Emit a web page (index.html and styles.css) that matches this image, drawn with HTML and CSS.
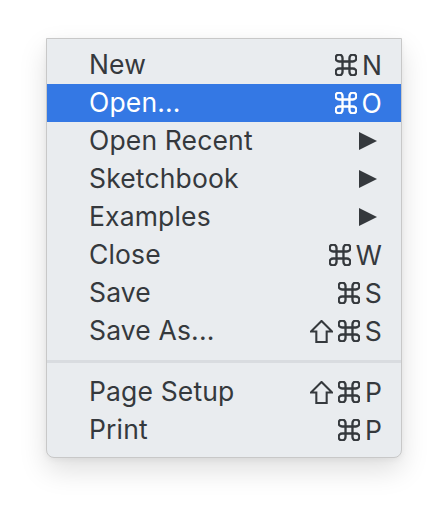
FILE: index.html
```html
<!DOCTYPE html>
<html>
<head>
<meta charset="utf-8">
<link rel="stylesheet" href="styles.css">
</head>
<body>
<div class="menu">
  <div class="item"><span class="label">New</span><span class="key"><svg class="cmd" viewBox="2.5 2.5 19 19"><path d="M18 3a3 3 0 0 0-3 3v12a3 3 0 0 0 3 3 3 3 0 0 0 3-3 3 3 0 0 0-3-3H6a3 3 0 0 0-3 3 3 3 0 0 0 3 3 3 3 0 0 0 3-3V6a3 3 0 0 0-3-3 3 3 0 0 0-3 3 3 3 0 0 0 3 3h12a3 3 0 0 0 3-3 3 3 0 0 0-3-3z"/></svg><span class="ch">N</span></span></div>
  <div class="item active"><span class="label">Open...</span><span class="key"><svg class="cmd" viewBox="2.5 2.5 19 19"><path d="M18 3a3 3 0 0 0-3 3v12a3 3 0 0 0 3 3 3 3 0 0 0 3-3 3 3 0 0 0-3-3H6a3 3 0 0 0-3 3 3 3 0 0 0 3 3 3 3 0 0 0 3-3V6a3 3 0 0 0-3-3 3 3 0 0 0-3 3 3 3 0 0 0 3 3h12a3 3 0 0 0 3-3 3 3 0 0 0-3-3z"/></svg><span class="ch">O</span></span></div>
  <div class="item"><span class="label">Open Recent</span><span class="key"><span class="tri"></span></span></div>
  <div class="item"><span class="label">Sketchbook</span><span class="key"><span class="tri"></span></span></div>
  <div class="item"><span class="label">Examples</span><span class="key"><span class="tri"></span></span></div>
  <div class="item"><span class="label">Close</span><span class="key"><svg class="cmd" viewBox="2.5 2.5 19 19"><path d="M18 3a3 3 0 0 0-3 3v12a3 3 0 0 0 3 3 3 3 0 0 0 3-3 3 3 0 0 0-3-3H6a3 3 0 0 0-3 3 3 3 0 0 0 3 3 3 3 0 0 0 3-3V6a3 3 0 0 0-3-3 3 3 0 0 0-3 3 3 3 0 0 0 3 3h12a3 3 0 0 0 3-3 3 3 0 0 0-3-3z"/></svg><span class="ch">W</span></span></div>
  <div class="item"><span class="label">Save</span><span class="key"><svg class="cmd" viewBox="2.5 2.5 19 19"><path d="M18 3a3 3 0 0 0-3 3v12a3 3 0 0 0 3 3 3 3 0 0 0 3-3 3 3 0 0 0-3-3H6a3 3 0 0 0-3 3 3 3 0 0 0 3 3 3 3 0 0 0 3-3V6a3 3 0 0 0-3-3 3 3 0 0 0-3 3 3 3 0 0 0 3 3h12a3 3 0 0 0 3-3 3 3 0 0 0-3-3z"/></svg><span class="ch">S</span></span></div>
  <div class="item"><span class="label">Save As...</span><span class="key"><svg class="shift" viewBox="2 2 20 20"><path d="M12 2.8L2.8 12H7.5V21.2H16.5V12H21.2Z"/></svg><svg class="cmd" viewBox="2.5 2.5 19 19"><path d="M18 3a3 3 0 0 0-3 3v12a3 3 0 0 0 3 3 3 3 0 0 0 3-3 3 3 0 0 0-3-3H6a3 3 0 0 0-3 3 3 3 0 0 0 3 3 3 3 0 0 0 3-3V6a3 3 0 0 0-3-3 3 3 0 0 0-3 3 3 3 0 0 0 3 3h12a3 3 0 0 0 3-3 3 3 0 0 0-3-3z"/></svg><span class="ch">S</span></span></div>
  <div class="sep"></div>
  <div class="item"><span class="label">Page Setup</span><span class="key"><svg class="shift" viewBox="2 2 20 20"><path d="M12 2.8L2.8 12H7.5V21.2H16.5V12H21.2Z"/></svg><svg class="cmd" viewBox="2.5 2.5 19 19"><path d="M18 3a3 3 0 0 0-3 3v12a3 3 0 0 0 3 3 3 3 0 0 0 3-3 3 3 0 0 0-3-3H6a3 3 0 0 0-3 3 3 3 0 0 0 3 3 3 3 0 0 0 3-3V6a3 3 0 0 0-3-3 3 3 0 0 0-3 3 3 3 0 0 0 3 3h12a3 3 0 0 0 3-3 3 3 0 0 0-3-3z"/></svg><span class="ch">P</span></span></div>
  <div class="item"><span class="label">Print</span><span class="key"><svg class="cmd" viewBox="2.5 2.5 19 19"><path d="M18 3a3 3 0 0 0-3 3v12a3 3 0 0 0 3 3 3 3 0 0 0 3-3 3 3 0 0 0-3-3H6a3 3 0 0 0-3 3 3 3 0 0 0 3 3 3 3 0 0 0 3-3V6a3 3 0 0 0-3-3 3 3 0 0 0-3 3 3 3 0 0 0 3 3h12a3 3 0 0 0 3-3 3 3 0 0 0-3-3z"/></svg><span class="ch">P</span></span></div>
</div>
</body>
</html>
```
FILE: styles.css
```css
html, body {
  margin: 0;
  padding: 0;
  background: #ffffff;
}
body {
  font-family: Inter, "Noto Sans", "Liberation Sans", sans-serif;
  min-height: 512px;
}
.menu {
  margin: 38px 0 0 46px;
  width: 354px;
  background: #e9ecef;
  border: 1px solid #c8c8c8;
  border-radius: 0 0 8px 8px;
  box-shadow: 0 12px 28px rgba(0, 0, 0, 0.13), 0 2px 6px rgba(0, 0, 0, 0.05);
  padding: 7px 0 8px;
}
.item {
  display: flex;
  justify-content: space-between;
  align-items: center;
  height: 38px;
  padding: 0 19px 0 42px;
  color: #35393d;
  font-size: 26.5px;
  letter-spacing: 0.15px;
}
.label {
  position: relative;
  top: -1px;
}
.item.active {
  background: #3478e4;
  color: #ffffff;
}
.key {
  display: flex;
  align-items: center;
}
.cmd, .shift {
  width: 22px;
  height: 22px;
  fill: none;
  stroke: currentColor;
  stroke-width: 2;
  stroke-linejoin: miter;
}
.cmd {
  margin-right: 5px;
}
.shift {
  width: 23px;
  height: 23px;
  margin-right: 5px;
  stroke-width: 1.8;
}
.ch {
  line-height: 1;
}
.tri {
  width: 0;
  height: 0;
  border-top: 9px solid transparent;
  border-bottom: 9px solid transparent;
  border-left: 18px solid #35393d;
  margin-right: 5px;
}
.sep {
  height: 3px;
  background: #d9dce0;
  margin: 10px 0;
}
```
